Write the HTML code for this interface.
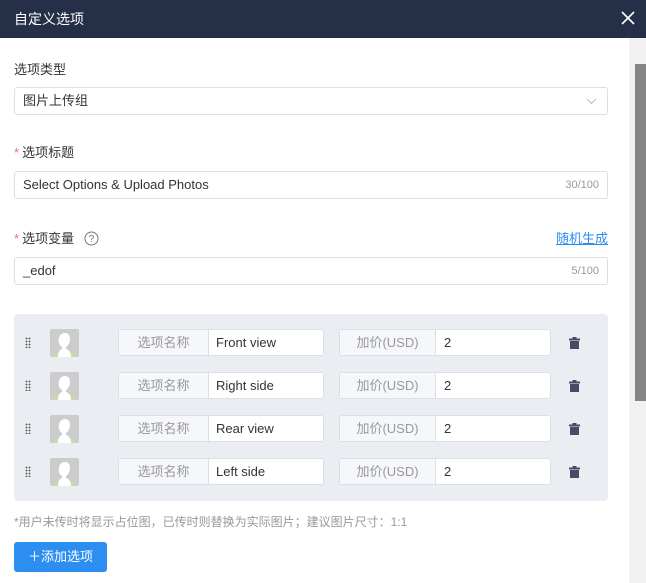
<!DOCTYPE html>
<html><head><meta charset="utf-8"><style>
*{box-sizing:border-box;margin:0;padding:0}
body{width:646px;height:583px;overflow:hidden;background:#fff;font-family:"Liberation Sans","Noto Sans CJK SC",sans-serif;position:relative;color:#333}
.hd{position:absolute;left:0;top:0;width:646px;height:38px;background:#253048;color:#fff;font-size:14px;line-height:38px;padding-left:14px}
.x{position:absolute;right:11px;top:11px}
.sb{position:absolute;left:629px;top:38px;width:17px;height:545px;background:#f1f1f1}
.th{position:absolute;left:635px;top:64px;width:11px;height:337px;background:#858585}
.lb{position:absolute;left:14px;font-size:13px;color:#333}
.st{color:#f56c6c;margin-right:3px}
.in{position:absolute;left:14px;width:594px;height:28px;border:1px solid #dcdfe6;border-radius:3px;font-size:13px;line-height:26px;padding-left:8px;color:#333}
.cnt{position:absolute;right:8px;top:0;font-size:11px;color:#999}
.pn{position:absolute;left:14px;top:314px;width:594px;height:187px;background:#eaedf2;border-radius:4px}
.row{position:absolute;left:0;width:594px;height:28px}
.dr{position:absolute;left:11px;top:8px;width:6px;height:11px;background-image:radial-gradient(circle,#666 0.8px,transparent 1px);background-size:3px 3px}
.av{position:absolute;left:36px;top:0;width:29px;height:28px;background:#ccc;border-radius:2px;overflow:hidden}
.g{position:absolute;top:0;height:27px;border:1px solid #dcdfe6;border-radius:3px;background:#fff;font-size:13px;line-height:25px}
.g .l{position:absolute;left:0;top:0;height:25px;background:#f5f7fa;color:#999;text-align:center;border-right:1px solid #dcdfe6}
.g .v{position:absolute;top:0;color:#333}
.tr{position:absolute;left:555px;top:8px}
</style></head><body>
<div class="hd">自定义选项
<svg class="x" width="14" height="14" viewBox="0 0 14 14"><path d="M1 1L13 13M13 1L1 13" stroke="#fff" stroke-width="1.6"/></svg></div>
<div class="sb"></div><div class="th"></div>

<div class="lb" style="top:59px">选项类型</div>
<div class="in" style="top:87px">图片上传组
<svg style="position:absolute;right:10px;top:10px" width="11" height="7" viewBox="0 0 11 7"><path d="M1 1L5.5 5.5L10 1" stroke="#bbb" fill="none"/></svg></div>

<div class="lb" style="top:142px"><span class="st">*</span>选项标题</div>
<div class="in" style="top:171px">Select Options &amp; Upload Photos<span class="cnt">30/100</span></div>

<div class="lb" style="top:228px"><span class="st">*</span>选项变量
<svg style="vertical-align:-3px;margin-left:6px" width="15" height="15" viewBox="0 0 15 15"><circle cx="7.5" cy="7.5" r="6.5" stroke="#777" fill="none"/><text x="7.5" y="11" font-size="10" text-anchor="middle" fill="#777" font-family="Liberation Sans">?</text></svg></div>
<div style="position:absolute;left:556px;top:228px;font-size:13px;color:#2d8cf0;text-decoration:underline">随机生成</div>
<div class="in" style="top:257px">_edof<span class="cnt">5/100</span></div>

<div class="pn">
<div class="row" style="top:15px"><div class="dr"></div><div class="av"><svg width="29" height="28" viewBox="0 0 29 28"><ellipse cx="14.5" cy="27" rx="11" ry="5" fill="#c5dba8"/><path d="M8 28C8 22 10 21 12 20L12 18C9 16 8 13 9 9C10 5 13 4 15 4C18 4 20 6 20 10C20 14 18 17 16 18L16 20C19 21 21 23 21 28Z" fill="#fff"/></svg></div>
<div class="g" style="left:104px;width:206px"><div class="l" style="width:90px">选项名称</div><div class="v" style="left:97px">Front view</div></div>
<div class="g" style="left:325px;width:212px"><div class="l" style="width:96px">加价(USD)</div><div class="v" style="left:104px">2</div></div>
<svg class="tr" width="11" height="12" viewBox="0 0 11 12"><rect x="0" y="1.5" width="11" height="2" fill="#4a4a66"/><rect x="3.5" y="0" width="4" height="2" fill="#4a4a66"/><rect x="1" y="4" width="9" height="8" fill="#4a4a66"/></svg></div>
<div class="row" style="top:58px"><div class="dr"></div><div class="av"><svg width="29" height="28" viewBox="0 0 29 28"><ellipse cx="14.5" cy="27" rx="11" ry="5" fill="#c5dba8"/><path d="M8 28C8 22 10 21 12 20L12 18C9 16 8 13 9 9C10 5 13 4 15 4C18 4 20 6 20 10C20 14 18 17 16 18L16 20C19 21 21 23 21 28Z" fill="#fff"/></svg></div>
<div class="g" style="left:104px;width:206px"><div class="l" style="width:90px">选项名称</div><div class="v" style="left:97px">Right side</div></div>
<div class="g" style="left:325px;width:212px"><div class="l" style="width:96px">加价(USD)</div><div class="v" style="left:104px">2</div></div>
<svg class="tr" width="11" height="12" viewBox="0 0 11 12"><rect x="0" y="1.5" width="11" height="2" fill="#4a4a66"/><rect x="3.5" y="0" width="4" height="2" fill="#4a4a66"/><rect x="1" y="4" width="9" height="8" fill="#4a4a66"/></svg></div>
<div class="row" style="top:101px"><div class="dr"></div><div class="av"><svg width="29" height="28" viewBox="0 0 29 28"><ellipse cx="14.5" cy="27" rx="11" ry="5" fill="#c5dba8"/><path d="M8 28C8 22 10 21 12 20L12 18C9 16 8 13 9 9C10 5 13 4 15 4C18 4 20 6 20 10C20 14 18 17 16 18L16 20C19 21 21 23 21 28Z" fill="#fff"/></svg></div>
<div class="g" style="left:104px;width:206px"><div class="l" style="width:90px">选项名称</div><div class="v" style="left:97px">Rear view</div></div>
<div class="g" style="left:325px;width:212px"><div class="l" style="width:96px">加价(USD)</div><div class="v" style="left:104px">2</div></div>
<svg class="tr" width="11" height="12" viewBox="0 0 11 12"><rect x="0" y="1.5" width="11" height="2" fill="#4a4a66"/><rect x="3.5" y="0" width="4" height="2" fill="#4a4a66"/><rect x="1" y="4" width="9" height="8" fill="#4a4a66"/></svg></div>
<div class="row" style="top:144px"><div class="dr"></div><div class="av"><svg width="29" height="28" viewBox="0 0 29 28"><ellipse cx="14.5" cy="27" rx="11" ry="5" fill="#c5dba8"/><path d="M8 28C8 22 10 21 12 20L12 18C9 16 8 13 9 9C10 5 13 4 15 4C18 4 20 6 20 10C20 14 18 17 16 18L16 20C19 21 21 23 21 28Z" fill="#fff"/></svg></div>
<div class="g" style="left:104px;width:206px"><div class="l" style="width:90px">选项名称</div><div class="v" style="left:97px">Left side</div></div>
<div class="g" style="left:325px;width:212px"><div class="l" style="width:96px">加价(USD)</div><div class="v" style="left:104px">2</div></div>
<svg class="tr" width="11" height="12" viewBox="0 0 11 12"><rect x="0" y="1.5" width="11" height="2" fill="#4a4a66"/><rect x="3.5" y="0" width="4" height="2" fill="#4a4a66"/><rect x="1" y="4" width="9" height="8" fill="#4a4a66"/></svg></div>
</div>

<div style="position:absolute;left:14px;top:513px;font-size:12px;color:#999">*用户未传时将显示占位图，已传时则替换为实际图片；建议图片尺寸：1:1</div>
<div style="position:absolute;left:14px;top:542px;width:93px;height:30px;background:#2b8ef0;border-radius:3px;color:#fff;font-size:13px;line-height:30px;text-align:center">＋添加选项</div>
</body></html>
